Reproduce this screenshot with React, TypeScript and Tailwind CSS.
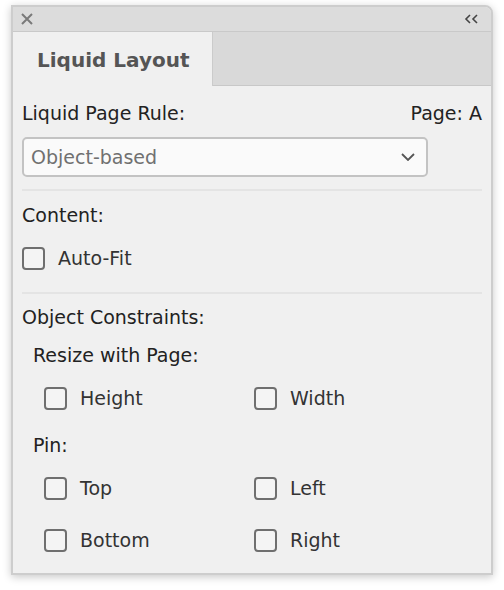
import React from 'react';

const font = { fontFamily: '"DejaVu Sans", "Lucida Grande", sans-serif' };

function Check({ label }: { label: string }) {
  return (
    <label className="flex items-center h-[24px] gap-[13px] cursor-pointer">
      <span className="w-[23px] h-[23px] rounded-[4px] border-2 border-[#6f6f6f] bg-[#f4f4f4] shrink-0" />
      <span className="text-[19px] leading-[24px] text-[#333]">{label}</span>
    </label>
  );
}

export default function App() {
  return (
    <div className="min-h-screen bg-white pt-[5px] pl-[11px]" style={font}>
      <div className="w-[482px] h-[570px] border-2 border-[#cdcdcd] rounded-tr-[8px] bg-[#f0f0f0] shadow-[0_2px_9px_rgba(0,0,0,0.22)] flex flex-col overflow-hidden">
        {/* title bar */}
        <div className="h-[25px] bg-[#dcdcdc] border-b border-[#c9c9c9] flex items-center justify-between pl-[8px] pr-[11px] shrink-0">
          <svg width="12" height="12" viewBox="0 0 12 12">
            <path d="M1 1 L11 11 M11 1 L1 11" stroke="#7a7a7a" strokeWidth="2" />
          </svg>
          <svg width="16" height="10" viewBox="0 0 16 10">
            <path d="M6 1 L2 5 L6 9 M13 1 L9 5 L13 9" stroke="#444" strokeWidth="1.6" fill="none" />
          </svg>
        </div>

        {/* tabs */}
        <div className="h-[54px] flex shrink-0">
          <div className="w-[200px] bg-[#f0f0f0] border-r border-[#cbcbcb] flex items-center pl-[24px]">
            <span className="text-[20px] font-bold text-[#555] pt-[2px]">Liquid Layout</span>
          </div>
          <div className="flex-1 bg-[#d9d9d9] border-b border-[#c8c8c8]" />
        </div>

        {/* content */}
        <div className="flex flex-col pl-[9px] pr-[9px] pt-[15px] text-[19px] leading-[24px] text-[#222]">
          <div className="h-[24px] flex justify-between">
            <span>Liquid Page Rule:</span>
            <span>Page: A</span>
          </div>

          <div className="mt-[12px] w-[406px] h-[40px] rounded-[5px] border-2 border-[#c3c3c3] bg-[#fafafa] flex items-center justify-between pl-[7px] pr-[11px]">
            <span className="text-[#707070]">Object-based</span>
            <svg width="14" height="8" viewBox="0 0 14 8">
              <path d="M1 1 L7 7 L13 1" stroke="#555" strokeWidth="1.8" fill="none" />
            </svg>
          </div>

          <div className="mt-[12px] h-[2px] bg-[#e4e4e4]" />

          <div className="mt-[12px] h-[24px]">Content:</div>
          <div className="mt-[19px]">
            <Check label="Auto-Fit" />
          </div>

          <div className="mt-[22px] h-[2px] bg-[#e4e4e4]" />

          <div className="mt-[11px] h-[24px]">Object Constraints:</div>
          <div className="mt-[14px] h-[24px] pl-[11px]">Resize with Page:</div>
          <div className="mt-[19px] grid grid-cols-[210px_1fr] pl-[22px]">
            <Check label="Height" />
            <Check label="Width" />
          </div>

          <div className="mt-[23px] h-[24px] pl-[11px]">Pin:</div>
          <div className="mt-[19px] grid grid-cols-[210px_1fr] pl-[22px]">
            <Check label="Top" />
            <Check label="Left" />
          </div>
          <div className="mt-[28px] grid grid-cols-[210px_1fr] pl-[22px]">
            <Check label="Bottom" />
            <Check label="Right" />
          </div>
        </div>
      </div>
    </div>
  );
}
